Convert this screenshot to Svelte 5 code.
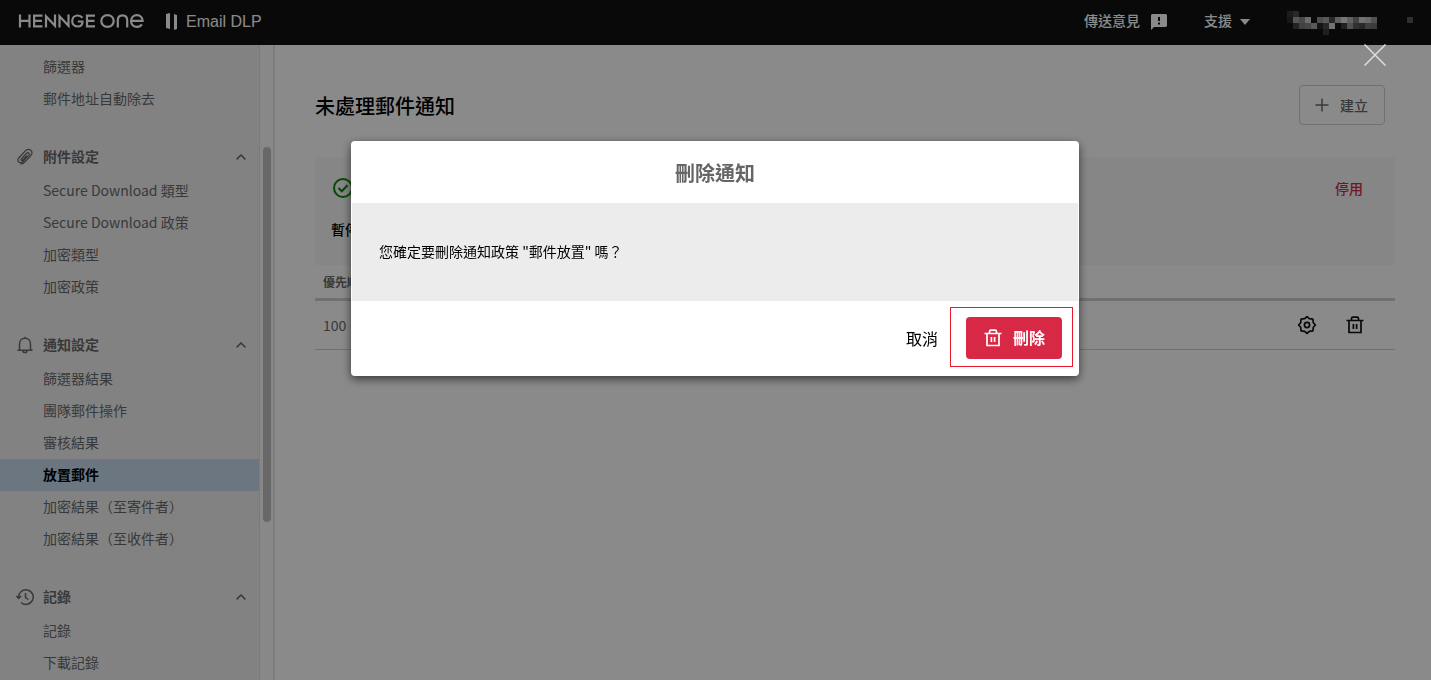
<script>
  const groups = [
    { items: ['篩選器', '郵件地址自動除去'] },
    { title: '附件設定', icon: 'clip', items: ['Secure Download 類型', 'Secure Download 政策', '加密類型', '加密政策'] },
    {
      title: '通知設定',
      icon: 'bell',
      items: ['篩選器結果', '團隊郵件操作', '審核結果', '放置郵件', '加密結果（至寄件者）', '加密結果（至收件者）']
    },
    { title: '記錄', icon: 'history', items: ['記錄', '下載記錄'] }
  ];
  const active = '放置郵件';

  // Brightness of each cell in the masked account name, 0 = empty.
  const mask = [
    [55, 75, 0, 0, 0, 0, 0, 0, 0, 0, 0, 0, 0, 0, 0],
    [45, 160, 135, 200, 0, 145, 165, 75, 180, 220, 180, 125, 210, 195, 150],
    [0, 65, 120, 130, 165, 40, 75, 210, 0, 60, 150, 90, 75, 115, 110],
    [0, 0, 0, 0, 0, 0, 60, 0, 0, 0, 0, 0, 0, 0, 0]
  ];
</script>

{#snippet trash()}
  <svg class="icon" viewBox="0 0 20 20" fill="none" stroke="currentColor" stroke-width="1.7" aria-hidden="true">
    <path d="M1.5 5.5h17M6.5 5.5V3.6c0-.9.6-1.5 1.5-1.5h4c.9 0 1.5.6 1.5 1.5v1.9M4 5.5V17.5h12V5.5M8.4 9v5M11.6 9v5" />
  </svg>
{/snippet}

<div class="app">
  <header class="top">
    <a class="brand" href="#home" aria-label="HENNGE one">
      <svg width="126" height="18" viewBox="0 0 126 18" fill="none" stroke="currentColor" stroke-width="2.2" aria-hidden="true">
        <path d="M2 1.500v13M11.500 1.500v13M2 7.800h9.500M24.500 2.600h-8.400v10.800h8.400M16.100 7.900h7.800M28 14.500V3.200L37 12.800V1.500M41.500 14.500V3.200L50.500 12.800V1.500M64.500 4.700C63.200 3.200 61.500 2.500 59.800 2.500c-3.300 0-5.600 2.300-5.600 5.500s2.300 5.500 5.600 5.500c2.700 0 4.700-1.400 4.700-5h-4.700M77 2.600h-8v10.800h8M69 7.900h7.500" />
        <ellipse cx="89.500" cy="8" rx="6.200" ry="5.900" />
        <path d="M99.800 14.500V7.300c0-3 1.900-4.900 4.700-4.900s4.700 1.900 4.700 4.900v7.200M113.200 7.900h11.400c-.1-3.400-2.400-5.700-5.700-5.700s-5.800 2.400-5.800 5.800 2.400 5.800 5.800 5.800c2.300 0 4-.9 5-2.500" />
      </svg>
    </a>
    <svg class="bars" width="12" height="18" viewBox="0 0 12 18" fill="currentColor" aria-hidden="true">
      <path d="M0 1l4-1v16l-4-1zM8 1l3 1v14l-3 1z" />
    </svg>
    <span class="product">Email DLP</span>
    <nav class="tools">
      <a href="#feedback">
        <span>傳送意見</span>
        <svg width="16" height="16" viewBox="0 0 16 16" aria-hidden="true">
          <path fill="currentColor" fill-rule="evenodd" d="M1.500 0h13C15.300 0 16 .7 16 1.500v10c0 .8-.7 1.500-1.500 1.500H3l-3 3V1.500C0 .7.7 0 1.500 0zM7 3v4h2V3zM7 8.500v2h2v-2z" />
        </svg>
      </a>
      <button class="support">
        <span>支援</span>
        <svg width="10" height="6" viewBox="0 0 10 6" aria-hidden="true"><path fill="currentColor" d="M0 0h10L5 6z" /></svg>
      </button>
      <svg class="account" width="126" height="24" viewBox="0 0 126 24" aria-hidden="true">
        {#each mask as row, y}
          {#each row as v, x}
            {#if v}<rect x={x * 6} y={y * 6} width="6" height="6" fill="rgb({v},{v},{v})" />{/if}
          {/each}
        {/each}
        <rect x="120" y="6" width="6" height="6" fill="#555" />
      </svg>
    </nav>
  </header>

  <div class="body">
    <aside>
      <nav class="side">
        {#each groups as g}
          <section>
            {#if g.title}
              <button class="group">
                <svg class="lead" viewBox="0 0 18 18" fill="none" stroke="currentColor" stroke-width="1.500" aria-hidden="true">
                  {#if g.icon === 'clip'}
                    <path d="M5.200 10.600l5.600-5.200c1.700-1.500 3.500.4 2 2L6.600 13.300c-3 2.700-6.700-1-3.900-3.800l6.800-6.400c4.200-3.800 9.300 1 5.300 5l-5.300 5c-2 1.900-3.500 2.800-5.500 2.600M5.200 10.600c-1 1 .2 2.100 1.200 1.200l4.400-4.100" transform="rotate(-4 9 9)" stroke-width="1.300" />
                  {:else if g.icon === 'bell'}
                    <path d="M1.500 14.200h15M3.500 14V8c0-3.400 2.300-5.800 5.500-5.800s5.500 2.400 5.500 5.800v6M9 2.200V.7M7 14.500c0 2.800 4 2.800 4 0" />
                  {:else}
                    <path d="M2.600 9.500A7.300 7.300 0 1 1 5 14.500M6.500 15.700a7.300 7.300 0 0 0 3 .6M.3 8l2.300 2.500L5.200 8M9.500 5v4.500l3 2" />
                  {/if}
                </svg>
                <span>{g.title}</span>
                <svg class="chev" width="10" height="6" viewBox="0 0 10 6" fill="none" stroke="currentColor" stroke-width="1.500" aria-hidden="true"><path d="M.6 5.400L5 1l4.400 4.400" /></svg>
              </button>
            {/if}
            {#each g.items as item}
              <a class="item" class:active={item === active} href="#{item}">{item}</a>
            {/each}
          </section>
        {/each}
      </nav>
      <div class="track"><div class="thumb"></div></div>
    </aside>

    <main>
      <div class="heading">
        <h1>未處理郵件通知</h1>
        <button class="create">
          <svg width="14" height="14" viewBox="0 0 14 14" stroke="currentColor" stroke-width="1.500" aria-hidden="true"><path d="M7 0.500v13M0.500 7h13" /></svg>
          建立
        </button>
      </div>
      <div class="panel">
        <div class="status">
          <svg width="20" height="20" viewBox="0 0 20 20" fill="none" stroke="currentColor" stroke-width="2" aria-hidden="true">
            <circle cx="10" cy="10" r="9" /><path d="M5.500 10l3.300 3.300 5.700-6" />
          </svg>
          <button class="disable">停用</button>
        </div>
        <strong>暫停</strong>
      </div>
      <table>
        <thead><tr><th>優先順序</th><th></th></tr></thead>
        <tbody>
          <tr>
            <td>100</td>
            <td>
              <div class="actions">
                <button aria-label="設定">
                  <svg class="icon" viewBox="0 0 20 20" fill="none" stroke="currentColor" stroke-width="1.700" stroke-linejoin="round" aria-hidden="true">
                    <path d="M10 1.600l2.300 2.100 3.600.4.400 3.600 2.100 2.300-2.100 2.300-.4 3.600-3.600.4L10 18.400l-2.300-2.100-3.600-.4-.4-3.600L1.600 10l2.100-2.300.4-3.600 3.600-.4z" />
                    <circle cx="10" cy="10" r="2.600" />
                  </svg>
                </button>
                <button aria-label="刪除">{@render trash()}</button>
              </div>
            </td>
          </tr>
        </tbody>
      </table>
    </main>
  </div>

  <div class="overlay">
    <button class="close" aria-label="關閉">
      <svg width="22" height="22" viewBox="0 0 22 22" stroke="currentColor" stroke-width="1.500" aria-hidden="true"><path d="M.5.500l21 21M21.500.500l-21 21" /></svg>
    </button>
    <div class="dialog" role="dialog" aria-modal="true" aria-labelledby="dialog-title">
      <h2 id="dialog-title">刪除通知</h2>
      <p>您確定要刪除通知政策 "郵件放置" 嗎？</p>
      <footer>
        <button class="cancel">取消</button>
        <div class="mark">
          <button class="delete">{@render trash()}<span>刪除</span></button>
        </div>
      </footer>
    </div>
  </div>
</div>

<style>
  :global(body) { margin: 0; }
  .app {
    height: 100vh;
    display: flex;
    flex-direction: column;
    overflow: hidden;
    background: #fff;
    color: #000;
    font: 14px/20px 'Noto Sans CJK TC', sans-serif;
  }
  button { font: inherit; color: inherit; background: none; border: 0; padding: 0; cursor: pointer; }
  a { color: inherit; text-decoration: none; }
  svg { display: block; flex: none; }
  .icon { width: 20px; height: 20px; }

  .top { flex: none; height: 45px; box-sizing: border-box; padding: 0 18px 1px; display: flex; align-items: center; background: #111; color: #fff; }
  .bars { margin: 0 8px 0 22px; }
  .product { font: 16px/20px 'Liberation Sans', Arial, sans-serif; }
  .tools { margin-left: auto; display: flex; align-items: center; font-weight: 500; }
  .tools a, .support { display: flex; align-items: center; gap: 11px; }
  .tools span { padding-bottom: 4px; }
  .support { margin-left: 37px; gap: 8px; font-weight: 500; }
  .account { margin: 2px 0 0 37px; }

  .body { flex: 1; min-height: 0; display: flex; }
  aside { flex: none; width: 273px; display: flex; background: #fbfbfb; border-right: 2px solid #e6e6e6; }
  .side { flex: 1; box-sizing: border-box; padding-top: 6px; overflow: hidden; background: #f1f1f1; border-right: 1px solid #e3e3e3; color: #6a6a6a; }
  section { margin-bottom: 24px; }
  .group { width: 100%; height: 36px; padding: 0 13px 0 16px; display: flex; align-items: center; gap: 9px; font-weight: 700; }
  .group span { padding-bottom: 2px; }
  .lead { width: 18px; height: 18px; }
  .chev { margin-left: auto; }
  .item { display: block; padding: 0 0 2px 43px; line-height: 30px; }
  .active { background: #c6dbed; color: #000; font-weight: 700; }
  .track { width: 13px; padding-top: 102px; }
  .thumb { width: 8px; height: 375px; margin-left: 3px; border-radius: 4px; background: #c1c1c1; }

  main { flex: 1; padding: 40px 36px 0 40px; }
  .heading { display: flex; justify-content: space-between; align-items: center; padding-right: 10px; margin-bottom: 32px; }
  h1 { margin: 0; padding-top: 2px; font-size: 20px; line-height: 28px; font-weight: 500; }
  .create { height: 40px; padding: 0 16px 0 15px; border: 1px solid #d0d0d0; border-radius: 4px; display: flex; align-items: center; gap: 11px; color: #6a6a6a; font-weight: 500; }
  .panel { height: 108px; box-sizing: border-box; padding: 21px 32px 0 16px; background: #f7f7f7; }
  .status { display: flex; justify-content: space-between; align-items: center; margin-bottom: 21px; color: #008a00; padding-left: 2px; }
  .disable { color: #d72848; font-weight: 500; }
  strong { font-weight: 500; }
  table { width: 100%; border-collapse: collapse; color: #6a6a6a; }
  th { height: 33px; padding: 0 8px; border-bottom: 3px solid #d0d0d0; text-align: left; font-size: 12px; }
  td { height: 48px; padding: 0 8px; border-bottom: 1px solid #d0d0d0; }
  .actions { display: flex; justify-content: flex-end; gap: 28px; padding-right: 22px; color: #111; }

  .overlay { position: fixed; inset: 0; background: rgba(0, 0, 0, 0.46); padding: 141px 25px 0 24px; }
  .close { position: absolute; top: 44px; right: 45px; color: #ddd; }
  .dialog { max-width: 728px; margin: 0 auto; background: #fff; border-radius: 4px; box-shadow: 0 3px 10px rgba(0, 0, 0, 0.6); }
  h2 { margin: 0; padding: 18px 0 16px; text-align: center; font-size: 20px; line-height: 28px; font-weight: 700; color: #666; }
  p { margin: 0 1px; padding: 38px 27px 40px; background: #ececec; }
  footer { display: flex; justify-content: flex-end; align-items: center; gap: 12px; padding: 6px 6px 9px; font-size: 16px; }
  .cancel { font-weight: 400; padding-top: 2px; }
  .mark { padding: 9px 10px 7px 15px; border: 1px solid #e8192c; }
  .delete { height: 42px; padding: 0 17px; display: flex; align-items: center; gap: 10px; border-radius: 4px; background: #d72846; color: #fff; font-weight: 700; }
  .delete span { padding-bottom: 2px; }
</style>
